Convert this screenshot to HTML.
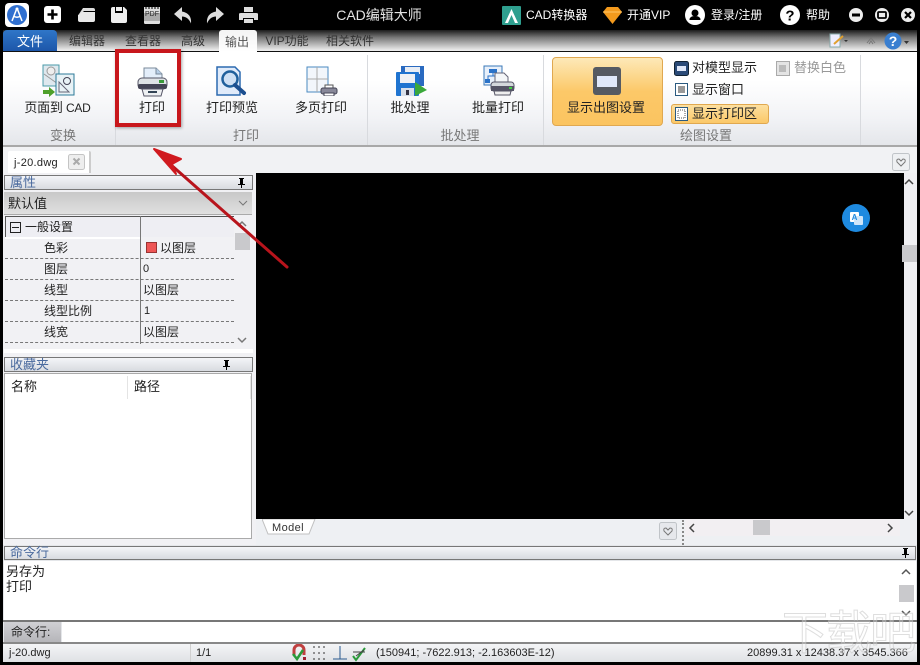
<!DOCTYPE html>
<html lang="zh"><head><meta charset="utf-8"><title>CAD编辑大师</title>
<style>
html,body{margin:0;padding:0;background:#000}
#r{position:relative;width:920px;height:665px;overflow:hidden;background:#000;font-family:"Liberation Sans","Noto Sans CJK SC",sans-serif;font-size:13px;color:#222}
#r div,#r span,#r svg{position:absolute}
.t{white-space:nowrap;line-height:16px}
.c{text-align:center;transform:translateX(-50%)}
.w{color:#fff}
.g{color:#777}
.bar{background:linear-gradient(#f4f5f8,#d8dbe0);border:1px solid #777;box-sizing:border-box;color:#4a6a9e}
</style></head><body><div id="r">

<!-- title bar icons -->
<div style="left:5px;top:3px;width:24px;height:24px;background:#fff;border-radius:4px"></div>
<svg style="left:7px;top:5px" width="20" height="20" viewBox="0 0 20 20"><circle cx="10" cy="10" r="10" fill="#2f6fd0"/><path d="M10 3L5 16M10 3l5 13M6.500 11q3.500 2.500 7 0" stroke="#fff" stroke-width="1.500" fill="none"/><circle cx="10" cy="4" r="1.500" fill="#fff"/></svg>
<svg style="left:44px;top:6px" width="18" height="18"><rect width="17" height="17" rx="3" fill="#fff"/><path d="M8.500 3.500v10M3.500 8.500h10" stroke="#000" stroke-width="2.600"/></svg>
<svg style="left:76px;top:6px" width="20" height="18"><path d="M7 2h10q2 0 2 2v1H8L5 8H3z" fill="#ddd"/><path d="M2 9l4-3h13v8q0 2-2 2H4q-2 0-2-2z" fill="#e8e8e8"/></svg>
<svg style="left:110px;top:6px" width="18" height="18"><path d="M3 1h11l3 3v11q0 2-2 2H3q-2 0-2-2V3q0-2 2-2z" fill="#eee"/><rect x="5" y="1" width="8" height="6" fill="#000"/><rect x="6" y="1" width="6" height="4" fill="#eee"/></svg>
<svg style="left:143px;top:5px" width="18" height="20"><path d="M1 2h16v16q0 1-2 1H3q-2 0-2-1z" fill="#ddd"/><path d="M3 1v3M6 1v3M9 1v3M12 1v3M15 1v3" stroke="#000"/><rect x="1" y="8" width="16" height="8" fill="#aaa"/></svg>
<span class="t" style="left:145px;top:11px;font-size:7px;line-height:8px;color:#222">PDF</span>
<svg style="left:174px;top:7px" width="18" height="17"><path d="M8 0L0 7l8 7V9.500q6 0 9 7 1-10-9-12z" fill="#ddd"/></svg>
<svg style="left:206px;top:7px" width="18" height="17"><path d="M10 0l8 7-8 7V9.500q-6 0-9 7-1-10 9-12z" fill="#ddd"/></svg>
<svg style="left:239px;top:7px" width="19" height="17"><path d="M5 0h9v5H5z" fill="#ddd"/><path d="M0 7q0-1 2-1h15q2 0 2 1v6h-4v-2H4v2H0z" fill="#ddd"/><path d="M5 12h9v4H5z" fill="#ddd"/></svg>
<div class="t c w" style="left:379px;top:7px;font-size:14px;color:#e4e4e4">CAD编辑大师</div>

<svg style="left:502px;top:6px" width="19" height="19"><rect width="19" height="19" rx="1" fill="#2f9f8f"/><path d="M3 17L9.500 3 16 17h-3L9.500 9 6 17z" fill="#fff"/></svg>
<div class="t w" style="left:526px;top:7px;font-size:12px">CAD转换器</div>
<svg style="left:603px;top:7px" width="19" height="17"><path d="M4 0h11l4 5-9.500 12L0 5z" fill="#f39a1d"/><path d="M0 5h19" stroke="#ffc766"/></svg>
<div class="t w" style="left:627px;top:7px;font-size:12px">开通VIP</div>
<svg style="left:685px;top:5px" width="20" height="20"><circle cx="10" cy="10" r="10" fill="#fff"/><circle cx="10" cy="8" r="3.500" fill="#000"/><path d="M4.500 15q0-4 5.500-4t5.500 4z" fill="#000"/></svg>
<div class="t w" style="left:711px;top:7px;font-size:12px">登录/注册</div>
<svg style="left:780px;top:5px" width="20" height="20"><circle cx="10" cy="10" r="10" fill="#fff"/><text x="10" y="15.500" text-anchor="middle" font-family="Liberation Sans" font-weight="bold" font-size="15" fill="#000">?</text></svg>
<div class="t w" style="left:806px;top:7px;font-size:12px">帮助</div>
<svg style="left:848px;top:7px" width="68" height="16"><circle cx="8" cy="8" r="7" fill="#eee"/><rect x="4" y="6.500" width="8" height="3" fill="#000"/><circle cx="34" cy="8" r="7" fill="#eee"/><rect x="30" y="5" width="8" height="6" rx="1" fill="none" stroke="#000" stroke-width="1.800"/><circle cx="60" cy="8" r="7" fill="#eee"/><path d="M57 5l6 6M63 5l-6 6" stroke="#000" stroke-width="2.200"/></svg>

<!-- tab row -->
<div style="left:3px;top:30px;width:914px;height:22px;background:linear-gradient(#1c1c1c,#7a7a7a 35%,#e8e8e8 90%,#f2f2f2)"></div>
<div style="left:3px;top:30px;width:54px;height:22px;background:linear-gradient(#2f76c8,#1c55a8);border-radius:4px 4px 0 0"></div>
<div class="t c w" style="left:30px;top:34px">文件</div>
<div class="t c" style="left:87px;top:33px;font-size:12px;color:#333">编辑器</div>
<div class="t c" style="left:143px;top:33px;font-size:12px;color:#333">查看器</div>
<div class="t c" style="left:193px;top:33px;font-size:12px;color:#333">高级</div>
<div style="left:219px;top:30px;width:38px;height:23px;background:linear-gradient(#f4f4f4,#fff);border-radius:3px 3px 0 0"></div>
<div class="t c" style="left:237px;top:34px;font-size:12px;color:#555">输出</div>
<div class="t c" style="left:287px;top:33px;font-size:12px;color:#333">VIP功能</div>
<div class="t c" style="left:350px;top:33px;font-size:12px;color:#333">相关软件</div>
<svg style="left:829px;top:33px" width="20" height="15"><path d="M1 1h10v13H1z" fill="#eef" stroke="#8aa"/><path d="M5 11l9-8" stroke="#e0a030" stroke-width="2"/><path d="M15 7l4 0-2 2z" fill="#333"/></svg>
<svg style="left:866px;top:36px" width="11" height="9"><path d="M1 7l4-5 4 5M3 8l2-3 2 3" stroke="#777" fill="none"/></svg>
<svg style="left:883px;top:31px" width="28" height="20"><circle cx="10" cy="10" r="8.500" fill="#3a7fd0"/><text x="10" y="15" text-anchor="middle" font-family="Liberation Sans" font-weight="bold" font-size="14" fill="#fff">?</text><path d="M21 10h5l-2.500 3z" fill="#333"/></svg>

<!-- ribbon -->
<div style="left:3px;top:52px;width:914px;height:94px;background:linear-gradient(#fff 30%,#f2f3f6 70%,#e4e6ea)"></div>
<div style="left:3px;top:51px;width:914px;height:1px;background:#111"></div>
<div style="left:219px;top:51px;width:38px;height:1px;background:#fff"></div>
<div style="left:3px;top:145px;width:914px;height:2px;background:#a8a8a8"></div>
<div style="left:115px;top:55px;width:1px;height:90px;background:#d8dade"></div>
<div style="left:367px;top:55px;width:1px;height:90px;background:#d8dade"></div>
<div style="left:543px;top:55px;width:1px;height:90px;background:#d8dade"></div>
<div style="left:860px;top:55px;width:1px;height:90px;background:#d8dade"></div>

<!-- ribbon: icons -->
<svg style="left:42px;top:64px" width="34" height="34"><rect x="1" y="1" width="16" height="21" fill="#dfe8ee" stroke="#4a9aa8"/><circle cx="9" cy="7" r="4" fill="#eee" stroke="#999"/><path d="M2 10l14 10" stroke="#999"/><rect x="14" y="10" width="18" height="21" fill="#e8f2f6" stroke="#2c7a98"/><circle cx="25" cy="17" r="3.500" fill="none" stroke="#445"/><path d="M17 18v10h10z" fill="none" stroke="#667"/><path d="M1 26h6v-3l6 5-6 5v-3H1z" fill="#4ea02a"/></svg>
<svg style="left:137px;top:66px" width="31" height="31"><path d="M7 2h12l6 6v8H7z" fill="#e4eefa" stroke="#7a8a9a"/><path d="M19 2v6h6" fill="#b8cfe8" stroke="#7a8a9a"/><rect x="1" y="12" width="29" height="11" rx="4" fill="#dfe3e6" stroke="#556"/><rect x="1" y="18" width="29" height="5" rx="2" fill="#445"/><rect x="22" y="14" width="5" height="3" fill="#3a9a3a"/><path d="M5 23h21l-2 7H7z" fill="#eef0f2" stroke="#556"/><rect x="11" y="25" width="9" height="2" fill="#345"/></svg>
<svg style="left:216px;top:66px" width="32" height="31"><path d="M1 1h18l5 5v23H1z" fill="#e0ebfa" stroke="#2c6ab0" stroke-width="1.500"/><circle cx="14" cy="13" r="7.500" fill="#cfe0f4" stroke="#20609c" stroke-width="2.500"/><path d="M19 19l9 8" stroke="#1c4f90" stroke-width="4" stroke-linecap="round"/></svg>
<svg style="left:306px;top:66px" width="32" height="30"><rect x="1" y="1" width="21" height="25" fill="#f2f6fb" stroke="#4a8ac0"/><path d="M11 1v25M1 13h21" stroke="#aaa"/><path d="M19 19h8v4h-8z" fill="#fff" stroke="#555"/><rect x="15" y="22" width="16" height="6" rx="2" fill="#889" stroke="#445"/><rect x="18" y="27" width="10" height="3" fill="#fff" stroke="#445"/></svg>
<svg style="left:395px;top:65px" width="33" height="32"><rect x="6" y="1" width="23" height="20" fill="#2a6ac0"/><rect x="10" y="2" width="15" height="7" fill="#e8edf4"/><rect x="1" y="7" width="23" height="24" rx="1" fill="#1f74d0"/><rect x="5" y="9" width="15" height="9" fill="#eef1f5"/><rect x="6" y="23" width="13" height="8" fill="#d8e0ea"/><rect x="11" y="25" width="3" height="5" fill="#334"/><path d="M20 17l12 8-12 6z" fill="#3aa83a"/></svg>
<svg style="left:483px;top:65px" width="32" height="31"><rect x="1" y="1" width="18" height="19" fill="#e8f0fa" stroke="#3a78b8"/><rect x="6" y="4" width="8" height="4" fill="#2a72c8"/><path d="M10 8v3M5 14v-3h10v3" stroke="#2a72c8" fill="none"/><rect x="2" y="14" width="5" height="4" fill="#2a72c8"/><path d="M12 8h9l4 4v7H12z" fill="#f4f6f8" stroke="#667"/><rect x="8" y="17" width="23" height="9" rx="3" fill="#d4d8dc" stroke="#556"/><rect x="8" y="21" width="23" height="5" fill="#556"/><rect x="26" y="22" width="3" height="2" fill="#4c4"/><path d="M11 26h17l-1 4H12z" fill="#eee" stroke="#556"/></svg>

<!-- ribbon labels -->
<div class="t c" style="left:57.500px;top:100px;letter-spacing:-.25px">页面到 <span style="position:static;font-size:12px">CAD</span></div>
<div class="t c" style="left:152px;top:100px">打印</div>
<div class="t c" style="left:232px;top:100px">打印预览</div>
<div class="t c" style="left:321px;top:100px">多页打印</div>
<div class="t c" style="left:410px;top:100px">批处理</div>
<div class="t c" style="left:498px;top:100px">批量打印</div>
<div class="t c g" style="left:63px;top:128px">变换</div>
<div class="t c g" style="left:246px;top:128px">打印</div>
<div class="t c g" style="left:460px;top:128px">批处理</div>
<div class="t c g" style="left:706px;top:128px">绘图设置</div>

<!-- display group -->
<div style="left:552px;top:57px;width:111px;height:69px;box-sizing:border-box;border:1px solid #e0a850;border-radius:4px;background:linear-gradient(#fde9b8,#fcc868 50%,#fbc460)"></div>
<svg style="left:593px;top:67px" width="28" height="28"><rect width="28" height="28" rx="3" fill="#555a62"/><rect x="4" y="9" width="20" height="11" fill="#dfe8fa"/></svg>
<div class="t c" style="left:606px;top:100px">显示出图设置</div>
<svg style="left:674px;top:61px" width="15" height="15"><rect x=".5" y=".5" width="14" height="14" rx="2" fill="#2a4a78" stroke="#123"/><rect x="3" y="5" width="9" height="5" fill="#dfe8fa"/></svg>
<div class="t" style="left:692px;top:60px">对模型显示</div>
<svg style="left:675px;top:83px" width="13" height="13"><rect x=".5" y=".5" width="12" height="12" fill="#fff" stroke="#2a5a80"/><rect x="3" y="3" width="7" height="7" fill="#999"/></svg>
<div class="t" style="left:692px;top:82px">显示窗口</div>
<div style="left:671px;top:104px;width:98px;height:20px;box-sizing:border-box;border:1px solid #e0a850;border-radius:3px;background:linear-gradient(#fde0a0,#fbc868)"></div>
<svg style="left:675px;top:107px" width="13" height="14"><rect x=".5" y=".5" width="12" height="13" fill="#fff" stroke="#2a5a80"/><rect x="3" y="3" width="7" height="8" fill="none" stroke="#555" stroke-dasharray="1 1"/></svg>
<div class="t" style="left:692px;top:106px">显示打印区</div>
<svg style="left:776px;top:61px" width="14" height="15"><rect x=".5" y=".5" width="13" height="14" fill="#e4e4e4" stroke="#aaa"/><rect x="3" y="4" width="7" height="7" fill="#bbb"/></svg>
<div class="t" style="left:794px;top:60px;color:#999">替换白色</div>

<!-- doc tab bar -->
<div style="left:3px;top:147px;width:914px;height:26px;background:#f1f2f4"></div>
<div style="left:8px;top:151px;width:81px;height:22px;background:#fff;border-right:2px solid #ccc;border-radius:2px 2px 0 0"></div>
<div class="t" style="left:14px;top:155px;font-size:11px;letter-spacing:.3px">j-20.dwg</div>
<svg style="left:68px;top:154px" width="18" height="17"><rect x=".5" y=".5" width="16" height="15" rx="2" fill="#eee" stroke="#c4c4c4"/><path d="M5.500 4.500l6 6M11.500 4.500l-6 6" stroke="#aaa" stroke-width="2"/></svg>
<svg style="left:892px;top:153px" width="18" height="18"><rect x=".5" y=".5" width="17" height="17" rx="2" fill="#eef0f2" stroke="#c0c4c8"/><path d="M9 13L5 9q-1-3 2-3l2 2 2-2q3 0 2 3z" fill="none" stroke="#777"/></svg>

<!-- left panels -->
<div style="left:3px;top:173px;width:253px;height:372px;background:#f1f1f4"></div>
<div class="bar" style="left:4px;top:175px;width:249px;height:15px"></div>
<div class="t" style="left:10px;top:175px;color:#4a6a9e">属性</div>
<svg style="left:236px;top:178px" width="10" height="10"><path d="M3 0h5v1H7v5h2v1H6v3H5V7H2V6h2V1H3z" fill="#000"/></svg>
<div style="left:4px;top:192px;width:248px;height:23px;background:linear-gradient(#c8c8c8,#e0e0e0);border-bottom:1px solid #aaa;box-sizing:border-box"></div>
<div class="t" style="left:8px;top:196px;font-size:13px">默认值</div>
<svg style="left:238px;top:200px" width="10" height="8"><path d="M1 1l4 4 4-4" fill="none" stroke="#777"/></svg>
<div style="left:5px;top:216px;width:229px;height:21px;background:#eeeef3;border-top:1px solid #555;border-left:1px solid #555;box-sizing:border-box"></div>
<div style="left:140px;top:216px;width:1px;height:128px;background:#777"></div>
<div style="left:5px;top:237px;width:135px;height:2px;background:#fff"></div>
<svg style="left:10px;top:222px" width="11" height="11"><rect x=".5" y=".5" width="10" height="10" fill="none" stroke="#222"/><path d="M2 5.500h7" stroke="#222"/></svg>
<div class="t" style="left:25px;top:219px;font-size:12px">一般设置</div>
<div style="left:5px;top:258px;width:229px;border-top:1px dashed #777"></div>
<div style="left:5px;top:279px;width:229px;border-top:1px dashed #777"></div>
<div style="left:5px;top:300px;width:229px;border-top:1px dashed #777"></div>
<div style="left:5px;top:321px;width:229px;border-top:1px dashed #777"></div>
<div style="left:5px;top:342px;width:229px;border-top:1px dashed #777"></div>
<div class="t" style="left:44px;top:240px;font-size:12px">色彩</div>
<div class="t" style="left:44px;top:261px;font-size:12px">图层</div>
<div class="t" style="left:44px;top:282px;font-size:12px">线型</div>
<div class="t" style="left:44px;top:303px;font-size:12px">线型比例</div>
<div class="t" style="left:44px;top:324px;font-size:12px">线宽</div>
<div style="left:146px;top:242px;width:11px;height:11px;background:#ee5555;border:1px solid #993333;box-sizing:border-box"></div>
<div class="t" style="left:160px;top:240px;font-size:12px">以图层</div>
<div class="t" style="left:143px;top:261px;font-size:11px">0</div>
<div class="t" style="left:143px;top:282px;font-size:12px">以图层</div>
<div class="t" style="left:144px;top:303px;font-size:11px">1</div>
<div class="t" style="left:143px;top:324px;font-size:12px">以图层</div>
<svg style="left:235px;top:220px" width="15" height="130"><path d="M3 6l4-4 4 4" fill="none" stroke="#777" stroke-width="1.500"/><rect y="13" width="15" height="17" fill="#c9c9cc"/><path d="M3 118l4 4 4-4" fill="none" stroke="#777" stroke-width="1.500"/></svg>
<div style="left:4px;top:349px;width:249px;height:4px;background:#fff"></div>

<div class="bar" style="left:4px;top:357px;width:249px;height:15px"></div>
<div class="t" style="left:10px;top:357px;color:#4a6a9e">收藏夹</div>
<svg style="left:221px;top:360px" width="10" height="10"><path d="M3 0h5v1H7v5h2v1H6v3H5V7H2V6h2V1H3z" fill="#000"/></svg>
<div style="left:4px;top:373px;width:248px;height:166px;background:#fff;border:1px solid #aaa;box-sizing:border-box"></div>
<div class="t" style="left:11px;top:379px;font-size:13px">名称</div>
<div class="t" style="left:134px;top:379px;font-size:13px">路径</div>
<div style="left:127px;top:376px;width:1px;height:23px;background:#e4e4e4"></div>
<div style="left:250px;top:376px;width:1px;height:23px;background:#e4e4e4"></div>

<!-- drawing area -->
<div style="left:256px;top:173px;width:648px;height:346px;background:#000"></div>
<svg style="left:842px;top:204px" width="28" height="28"><circle cx="14" cy="14" r="14" fill="#1e8ae0"/><rect x="8" y="8" width="9" height="10" rx="1" fill="#fff"/><rect x="12" y="12" width="9" height="9" rx="1" fill="#cfe6fa"/><text x="12.500" y="16" text-anchor="middle" font-family="Liberation Sans" font-weight="bold" font-size="8" fill="#1e8ae0">A</text></svg>
<!-- v scrollbar -->
<div style="left:904px;top:173px;width:13px;height:346px;background:#f0f0f3"></div>
<svg style="left:902px;top:173px" width="15" height="350"><path d="M3 11l4-4 4 4" fill="none" stroke="#444" stroke-width="1.500"/><rect x="0" y="72" width="15" height="17" fill="#c9c9cc"/><path d="M3 338l4 4 4-4" fill="none" stroke="#444" stroke-width="1.500"/></svg>

<div style="left:256px;top:519px;width:661px;height:26px;background:#eef0f3"></div>
<svg style="left:262px;top:519px" width="55" height="17"><path d="M0 0l6 15h41l6-15z" fill="#fff" stroke="#c0c0c0"/></svg>
<div class="t" style="left:272px;top:520px;font-size:11px;letter-spacing:.4px;color:#333">Model</div>
<svg style="left:659px;top:522px" width="18" height="18"><rect x=".5" y=".5" width="17" height="17" rx="2" fill="#e6e8ec" stroke="#c0c4c8"/><path d="M9 13L5 9q-1-3 2-3l2 2 2-2q3 0 2 3z" fill="none" stroke="#777"/></svg>
<div style="left:682px;top:520px;height:25px;border-left:2px dotted #888"></div>
<div style="left:685px;top:519px;width:215px;height:17px;background:#f2eff2"></div>
<div style="left:753px;top:520px;width:17px;height:15px;background:#c9c9cc"></div>
<svg style="left:688px;top:522px" width="210" height="12"><path d="M6 2L2 6l4 4M200 2l4 4-4 4" fill="none" stroke="#444" stroke-width="1.500"/></svg>

<!-- command panel -->
<div style="left:3px;top:545px;width:914px;height:117px;background:#e4e6e9"></div>
<div class="bar" style="left:4px;top:546px;width:912px;height:14px"></div>
<div class="t" style="left:10px;top:545px;color:#4a6a9e">命令行</div>
<svg style="left:900px;top:548px" width="10" height="10"><path d="M3 0h5v1H7v5h2v1H6v3H5V7H2V6h2V1H3z" fill="#000"/></svg>
<div style="left:4px;top:561px;width:912px;height:59px;background:#fff"></div>
<div class="t" style="left:6px;top:564px;line-height:15px;font-size:13px">另存为<br>打印</div>
<svg style="left:899px;top:565px" width="16" height="55"><path d="M3 9l4-4 4 4" fill="none" stroke="#555" stroke-width="1.500"/><rect y="20" width="15" height="17" fill="#c9c9cc"/><path d="M3 46l4 4 4-4" fill="none" stroke="#555" stroke-width="1.500"/></svg>
<div style="left:3px;top:620px;width:914px;height:2px;background:#777"></div>
<div style="left:4px;top:622px;width:57px;height:21px;background:linear-gradient(#d0d0d4,#b4b4b8)"></div>
<div class="t" style="left:11px;top:624px;font-size:12px">命令行:</div>
<div style="left:62px;top:622px;width:854px;height:20px;background:#fff"></div>
<div style="left:3px;top:642px;width:914px;height:2px;background:#888"></div>

<!-- status bar -->
<div style="left:3px;top:644px;width:914px;height:18px;background:linear-gradient(#f4f5f7,#dfe1e4)"></div>
<div style="left:190px;top:644px;width:1px;height:18px;background:#d0d0d0"></div>
<div class="t" style="left:9px;top:645px;font-size:11px">j-20.dwg</div>
<div class="t" style="left:196px;top:645px;font-size:11px">1/1</div>
<svg style="left:291px;top:644px" width="76" height="18"><path d="M3 11V6a5 5 0 0 1 10 0v5" fill="none" stroke="#c04040" stroke-width="3"/><path d="M2 10l4 5 6-9" fill="none" stroke="#2a9a3a" stroke-width="2.500"/><rect x="12" y="13" width="3" height="3" fill="#a02030"/><path d="M22 3h2M27 3h2M32 3h2M22 9h2M27 9h2M32 9h2M22 15h2M27 15h2M32 15h2" stroke="#333"/><path d="M49 2v13M42 15h14" stroke="#2a5a90"/><path d="M62 12l3 4 9-12" fill="none" stroke="#2a9a3a" stroke-width="2"/><path d="M62 8h12M65 12l8-6" stroke="#444"/></svg>
<div class="t" style="left:376px;top:645px;font-size:11px">(150941; -7622.913; -2.163603E-12)</div>
<div class="t" style="left:747px;top:645px;font-size:11px">20899.31 x 12438.37 x 3545.366</div>

<!-- watermark -->
<div class="t" style="left:782px;top:608px;font-size:46px;line-height:50px;letter-spacing:-2px;color:rgba(255,255,255,.28);-webkit-text-stroke:1px rgba(190,190,190,.5)">下载吧</div>

<!-- annotations -->
<div style="left:115px;top:49px;width:66px;height:78px;box-sizing:border-box;border:4px solid #c8171c;box-shadow:1px 1px 3px rgba(0,0,0,.35)"></div>
<svg style="left:140px;top:140px" width="160" height="140"><path d="M147 127L30 24" stroke="#b8141c" stroke-width="3" stroke-linecap="round"/><path d="M14 9L41 19 32 24 36 34z" fill="#d01a1f" stroke="#d01a1f" stroke-width="2" stroke-linejoin="round"/></svg>

</div></body></html>
